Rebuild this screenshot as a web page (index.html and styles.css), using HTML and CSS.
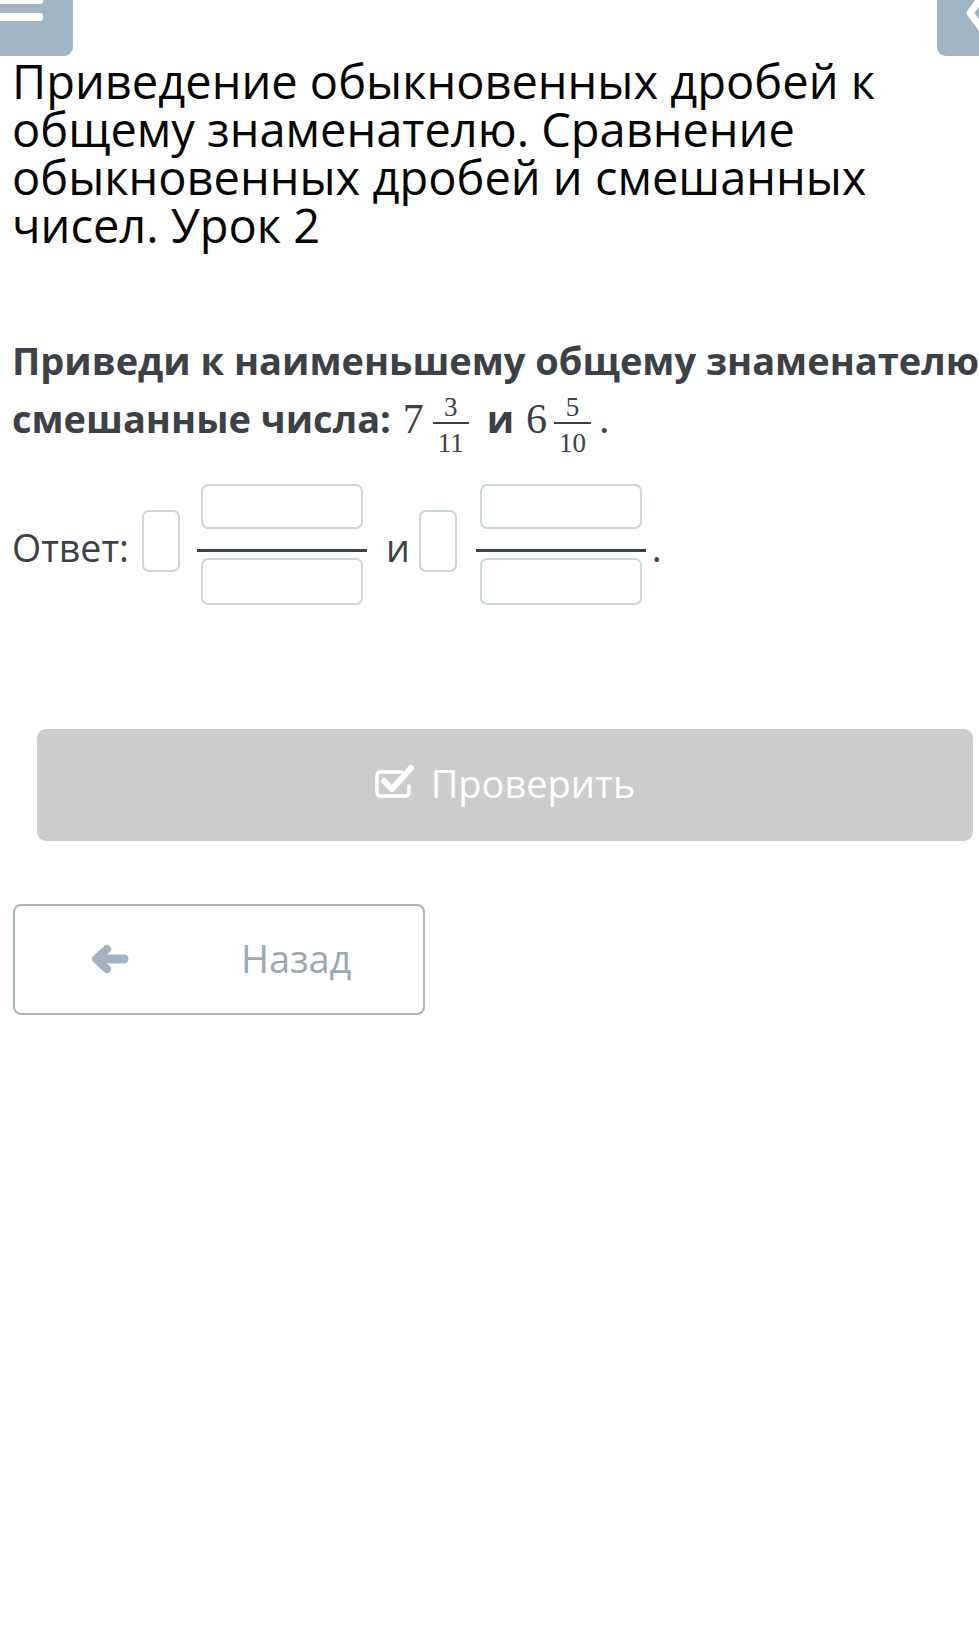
FILE: index.html
```html
<!DOCTYPE html>
<html lang="ru">
<head>
<meta charset="utf-8">
<title>Урок 2</title>
<link rel="stylesheet" href="styles.css">
</head>
<body>
<header class="topbar">
  <div class="menu-btn">
    <svg class="menu-icon" width="73" height="56" viewBox="0 0 73 56">
      <rect x="-10" y="-4" width="53" height="8" rx="3" fill="#fff"/>
      <rect x="-10" y="13" width="53" height="8" rx="3" fill="#fff"/>
    </svg>
  </div>
  <div class="top-back">
    <svg width="42" height="56" viewBox="0 0 42 56">
      <path d="M44 -2 L33 13 L44 28" fill="none" stroke="#fff" stroke-width="7" stroke-linecap="round" stroke-linejoin="round"/>
    </svg>
  </div>
</header>
<main class="content">
  <h1 class="title">Приведение обыкновенных дробей к общему знаменателю. Сравнение обыкновенных дробей и смешанных чисел. Урок 2</h1>
  <p class="task">Приведи к наименьшему общему знаменателю смешанные числа: <span class="math">7</span><span class="frac frac-a"><span class="num">3</span><span class="den">11</span></span> и <span class="math">6</span><span class="frac frac-b"><span class="num">5</span><span class="den">10</span></span><span class="math">.</span></p>
  <div class="answer">
    <span class="label">Ответ:</span>
    <span class="box-whole"></span>
    <span class="frac-input">
      <span class="box-part box-top"></span>
      <span class="frac-line"></span>
      <span class="box-part box-bottom"></span>
    </span>
    <span class="label conj">и</span>
    <span class="box-whole box-whole-2"></span>
    <span class="frac-input frac-input-2">
      <span class="box-part box-top"></span>
      <span class="frac-line"></span>
      <span class="box-part box-bottom"></span>
    </span>
    <span class="label dot">.</span>
  </div>
  <button class="check-btn" type="button">
    <svg class="check-icon" width="40" height="34" viewBox="0 0 40 34">
      <path d="M27 8 H6 Q2 8 2 12 V28 Q2 32 6 32 H30 Q34 32 34 28 V22" fill="none" stroke="#fff" stroke-width="3.5" stroke-linecap="round"/>
      <path d="M9 17 L17 25 L36 4" fill="none" stroke="#fff" stroke-width="6" stroke-linecap="round" stroke-linejoin="round"/>
    </svg>
    <span class="check-text">Проверить</span>
  </button>
  <button class="back-btn" type="button">
    <svg class="arrow-icon" width="38" height="30" viewBox="0 0 38 30">
      <path d="M16 5 L5 15 L16 25" fill="none" stroke="#9fb3c2" stroke-width="8" stroke-linecap="round" stroke-linejoin="round"/>
      <path d="M7 15 H33" fill="none" stroke="#9fb3c2" stroke-width="9" stroke-linecap="round"/>
    </svg>
    <span class="back-text">Назад</span>
  </button>
</main>
</body>
</html>
```
FILE: styles.css
```css
html, body {
  margin: 0;
  padding: 0;
  background: #ffffff;
}
body {
  font-family: "Open Sans", "Noto Sans", sans-serif;
  color: #000;
  overflow-x: hidden;
}
.topbar {
  display: flex;
  justify-content: space-between;
  height: 56px;
}
.menu-btn {
  width: 73px;
  height: 56px;
  background: #a0b4c4;
  border-radius: 0 0 9px 0;
  overflow: hidden;
}
.menu-icon, .top-back svg { display: block; }
.top-back {
  width: 42px;
  height: 56px;
  background: #a0b4c4;
  border-radius: 0 0 0 9px;
  overflow: hidden;
}
.content {
  padding: 0 0 0 12px;
}
.title {
  margin: 0;
  padding-top: 1px;
  font-size: 47px;
  font-weight: 400;
  line-height: 48px;
  color: #050505;
}
.task {
  margin: 82px -24px 0 0;
  font-size: 38px;
  font-weight: 700;
  line-height: 58px;
  color: #3c4047;
}
.math {
  font-family: "Liberation Serif", "DejaVu Serif", serif;
  font-weight: 400;
  font-size: 42px;
  margin-left: 2px;
}
.frac {
  display: inline-flex;
  flex-direction: column;
  align-items: stretch;
  vertical-align: 17px;
  font-family: "Liberation Serif", "DejaVu Serif", serif;
  font-weight: 400;
  font-size: 27px;
  text-align: center;
  margin: 0 8px 0 9px;
}
.frac-b { margin: 0 6px 0 7px; }
.num {
  display: block;
  line-height: 24px;
  padding: 0 5px 3px;
  border-bottom: 2px solid #3c4047;
}
.den {
  display: block;
  line-height: 24px;
  padding: 7px 5px 0;
}
.answer {
  display: flex;
  align-items: flex-start;
  margin-top: 29px;
  height: 121px;
}
.label {
  font-size: 37.5px;
  line-height: 40px;
  margin-top: 44px;
  color: #3c4047;
}
.box-whole {
  width: 34px;
  height: 58px;
  border: 2px solid #c9d6da;
  border-radius: 7px;
  margin: 26px 0 0 13px;
}
.frac-input {
  display: flex;
  flex-direction: column;
  align-items: center;
  width: 170px;
  margin-left: 17px;
}
.box-part {
  width: 158px;
  border: 2px solid #c9d6da;
  border-radius: 7px;
}
.box-top { height: 41px; }
.box-bottom { height: 43px; }
.frac-line {
  width: 170px;
  height: 3px;
  background: #3c4047;
  margin: 20px 0 6px;
}
.conj { margin-left: 19px; }
.box-whole-2 { margin-left: 9px; }
.frac-input-2 { margin-left: 19px; }
.dot { margin-left: 6px; }
.check-btn {
  display: flex;
  align-items: center;
  justify-content: center;
  gap: 16px;
  width: 936px;
  height: 112px;
  margin: 124px 0 0 25px;
  padding: 0 0 4px;
  background: #cccccc;
  border: none;
  border-radius: 9px;
  font-family: "Open Sans", "Noto Sans", sans-serif;
  color: #fff;
}
.check-icon { display: block; margin-top: -4px; }
.check-text {
  font-size: 38px;
  line-height: 52px;
}
.back-btn {
  display: flex;
  align-items: center;
  width: 412px;
  height: 111px;
  margin: 63px 0 0 1px;
  padding: 0 0 4px 76px;
  background: #fff;
  border: 2.5px solid #a6b4bc;
  border-radius: 8px;
  font-family: "Open Sans", "Noto Sans", sans-serif;
  box-sizing: border-box;
}
.arrow-icon { display: block; margin-top: 3px; }
.back-text {
  margin-left: 112px;
  font-size: 38px;
  line-height: 52px;
  color: #9aa9b1;
}
```
